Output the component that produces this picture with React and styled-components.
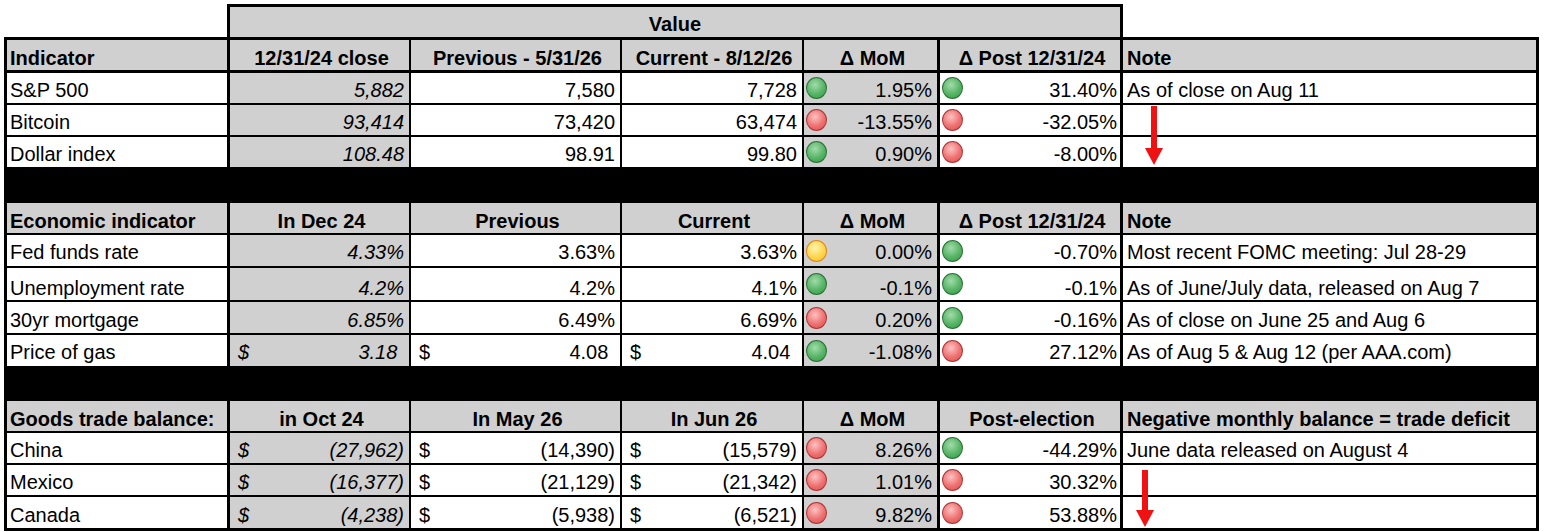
import React from "react";
import styled, { createGlobalStyle } from "styled-components";

const GRAY = "#d0d0d0";

const COLS = [
  { w: 223, edge: 3 },
  { w: 181, edge: 2 },
  { w: 211, edge: 2 },
  { w: 182, edge: 2 },
  { w: 136, edge: 3 },
  { w: 183, edge: 3 },
  { w: 413, edge: 0 },
];

const TONES = {
  green: { light: "#a3dbab", mid: "#55b464", dark: "#3b9549", edge: "#2a7236" },
  red: { light: "#fcc2c2", mid: "#ee7070", dark: "#d84d4d", edge: "#ab3535" },
  yellow: { light: "#fff4b0", mid: "#fdd54c", dark: "#f5bd28", edge: "#e2861a" },
};

const sections = [
  {
    band: 0,
    header: [
      "Indicator",
      "12/31/24 close",
      "Previous - 5/31/26",
      "Current - 8/12/26",
      "Δ MoM",
      "Δ Post 12/31/24",
      "Note",
    ],
    headerLine: 3,
    rows: [
      { h: 30, pb: 2, name: "S&P 500", base: "5,882", prev: "7,580", cur: "7,728", mom: ["green", "1.95%"], post: ["green", "31.40%"], note: "As of close on Aug 11" },
      { h: 30, pb: 2, name: "Bitcoin", base: "93,414", prev: "73,420", cur: "63,474", mom: ["red", "-13.55%"], post: ["red", "-32.05%"], note: "" },
      { h: 30, pb: 2, name: "Dollar index", base: "108.48", prev: "98.91", cur: "99.80", mom: ["green", "0.90%"], post: ["red", "-8.00%"], note: "" },
    ],
  },
  {
    band: 36,
    header: [
      "Economic indicator",
      "In Dec 24",
      "Previous",
      "Current",
      "Δ MoM",
      "Δ Post 12/31/24",
      "Note",
    ],
    headerLine: 2,
    rows: [
      { h: 31, pb: 3, name: "Fed funds rate", base: "4.33%", prev: "3.63%", cur: "3.63%", mom: ["yellow", "0.00%"], post: ["green", "-0.70%"], note: "Most recent FOMC meeting: Jul 28-29" },
      { h: 32, pb: 1, name: "Unemployment rate", base: "4.2%", prev: "4.2%", cur: "4.1%", mom: ["green", "-0.1%"], post: ["green", "-0.1%"], note: "As of June/July data, released on Aug 7" },
      { h: 31, pb: 2, name: "30yr mortgage", base: "6.85%", prev: "6.49%", cur: "6.69%", mom: ["red", "0.20%"], post: ["green", "-0.16%"], note: "As of close on June 25 and Aug 6" },
      { h: 31, pb: 3, name: "Price of gas", base: "$3.18", prev: "$4.08", cur: "$4.04", mom: ["green", "-1.08%"], post: ["red", "27.12%"], note: "As of Aug 5 & Aug 12 (per AAA.com)" },
    ],
  },
  {
    band: 35,
    header: [
      "Goods trade balance:",
      "in Oct 24",
      "In May 26",
      "In Jun 26",
      "Δ MoM",
      "Post-election",
      "Negative monthly balance = trade deficit",
    ],
    headerLine: 2,
    rows: [
      { h: 30, pb: 2, name: "China", base: "$(27,962)", prev: "$(14,390)", cur: "$(15,579)", mom: ["red", "8.26%"], post: ["green", "-44.29%"], note: "June data released on August 4" },
      { h: 30, pb: 2, name: "Mexico", base: "$(16,377)", prev: "$(21,129)", cur: "$(21,342)", mom: ["red", "1.01%"], post: ["red", "30.32%"], note: "" },
      { h: 31, pb: 2, name: "Canada", base: "$(4,238)", prev: "$(5,938)", cur: "$(6,521)", mom: ["red", "9.82%"], post: ["red", "53.88%"], note: "" },
    ],
  },
];

function Amount({ value }) {
  if (!value.startsWith("$")) return <span>{value}</span>;
  const num = value.slice(1);
  return (
    <>
      <Currency>$</Currency>
      <span>
        {num}
        {!num.endsWith(")") && <Hidden>)</Hidden>}
      </span>
    </>
  );
}

function ValueCell({ col, value, gray, italic }) {
  const money = value.startsWith("$");
  return (
    <Cell
      $w={COLS[col].w}
      $edge={COLS[col].edge}
      $gray={gray}
      $italic={italic}
      $align={money ? "between" : "right"}
      $pr={5}
    >
      <Amount value={value} />
    </Cell>
  );
}

function DeltaCell({ col, tone, value, gray }) {
  return (
    <Cell $w={COLS[col].w} $edge={COLS[col].edge} $gray={gray} $align="between" $pr={col === 5 ? 3 : 5}>
      <Dot $tone={tone} />
      <span>{value}</span>
    </Cell>
  );
}

function HeaderRow({ labels, line }) {
  return (
    <Row $h={30} $line={line} $gray $pb={1}>
      {labels.map((label, i) => (
        <Cell
          key={label}
          $w={COLS[i].w}
          $edge={COLS[i].edge}
          $bold
          $align={i === 0 || i === 6 ? "left" : "center"}
          $pl={i === 0 ? 3 : 4}
        >
          {label}
        </Cell>
      ))}
    </Row>
  );
}

function DataRow({ row, last }) {
  return (
    <Row $h={row.h} $line={last ? 0 : 2} $pb={row.pb}>
      <Cell $w={COLS[0].w} $edge={COLS[0].edge} $align="left" $pl={3}>
        {row.name}
      </Cell>
      <ValueCell col={1} value={row.base} gray italic />
      <ValueCell col={2} value={row.prev} />
      <ValueCell col={3} value={row.cur} />
      <DeltaCell col={4} tone={row.mom[0]} value={row.mom[1]} gray />
      <DeltaCell col={5} tone={row.post[0]} value={row.post[1]} />
      <Cell $w={COLS[6].w} $edge={0} $align="left" $pl={4}>
        {row.note}
      </Cell>
    </Row>
  );
}

function Arrow({ left, top, height }) {
  return (
    <ArrowMark $left={left} $top={top} width="18" height={height} viewBox={`0 0 18 ${height}`}>
      <rect x="6" y="0" width="6" height={height - 16} fill="#f01212" />
      <polygon points={`0,${height - 17} 18,${height - 17} 9,${height}`} fill="#f01212" />
    </ArrowMark>
  );
}

export default function App() {
  return (
    <>
      <GlobalStyle />
      <Page>
        <ValueBand>
          <ValueTitle>Value</ValueTitle>
        </ValueBand>
        <Sheet>
          {sections.map((section, s) => (
            <React.Fragment key={s}>
              {section.band > 0 && <BlackBand $h={section.band} />}
              <HeaderRow labels={section.header} line={section.headerLine} />
              {section.rows.map((row, r) => (
                <DataRow key={row.name} row={row} last={r === section.rows.length - 1} />
              ))}
            </React.Fragment>
          ))}
          <Arrow left={1138} top={66} height={59} />
          <Arrow left={1129} top={430} height={57} />
        </Sheet>
      </Page>
    </>
  );
}

const GlobalStyle = createGlobalStyle`
  body {
    margin: 0;
    background: #ffffff;
    color: #000000;
    font-family: "Liberation Sans", Arial, sans-serif;
    font-size: 20px;
  }
  * {
    box-sizing: border-box;
  }
`;

const Page = styled.div`
  padding: 4px 0 0 4px;
  width: 1544px;
  height: 532px;
  overflow: hidden;
`;

const ValueBand = styled.div`
  display: flex;
  margin-left: 223px;
`;

const ValueTitle = styled.div`
  width: 896px;
  height: 33px;
  border: 3px solid #000;
  border-bottom: none;
  background: ${GRAY};
  font-weight: bold;
  display: flex;
  align-items: flex-end;
  justify-content: center;
  line-height: 22px;
  padding-bottom: 2px;
`;

const Sheet = styled.div`
  position: relative;
  width: 1535px;
  border: 3px solid #000;
  display: flex;
  flex-direction: column;
`;

const BlackBand = styled.div`
  height: ${(p) => p.$h}px;
  background: #000;
`;

const Row = styled.div`
  --pb: ${(p) => p.$pb}px;
  display: flex;
  height: ${(p) => p.$h + p.$line}px;
  border-bottom: ${(p) => p.$line}px solid #000;
  background: ${(p) => (p.$gray ? GRAY : "#fff")};
`;

const JUSTIFY = {
  left: "flex-start",
  right: "flex-end",
  center: "center",
  between: "space-between",
};

const Cell = styled.div`
  width: ${(p) => p.$w}px;
  flex: none;
  height: 100%;
  display: flex;
  align-items: flex-end;
  justify-content: ${(p) => JUSTIFY[p.$align]};
  border-right: ${(p) => p.$edge}px solid #000;
  background: ${(p) => (p.$gray ? GRAY : "transparent")};
  font-style: ${(p) => (p.$italic ? "italic" : "normal")};
  font-weight: ${(p) => (p.$bold ? "bold" : "normal")};
  padding-left: ${(p) => p.$pl || 0}px;
  padding-right: ${(p) => p.$pr || 0}px;
  padding-bottom: var(--pb);
  line-height: 22px;
  white-space: nowrap;
  overflow: hidden;
`;

const Currency = styled.span`
  padding-left: 8px;
`;

const Hidden = styled.span`
  visibility: hidden;
`;

const Dot = styled.span`
  width: 21px;
  height: 22px;
  flex: none;
  align-self: center;
  margin-left: 2px;
  margin-bottom: calc(var(--pb) * -1);
  border-radius: 50%;
  border: 1.5px solid ${(p) => TONES[p.$tone].edge};
  background: radial-gradient(
    circle at 42% 35%,
    ${(p) => TONES[p.$tone].light} 0%,
    ${(p) => TONES[p.$tone].mid} 55%,
    ${(p) => TONES[p.$tone].dark} 100%
  );
`;

const ArrowMark = styled.svg`
  position: absolute;
  left: ${(p) => p.$left}px;
  top: ${(p) => p.$top}px;
  pointer-events: none;
`;
